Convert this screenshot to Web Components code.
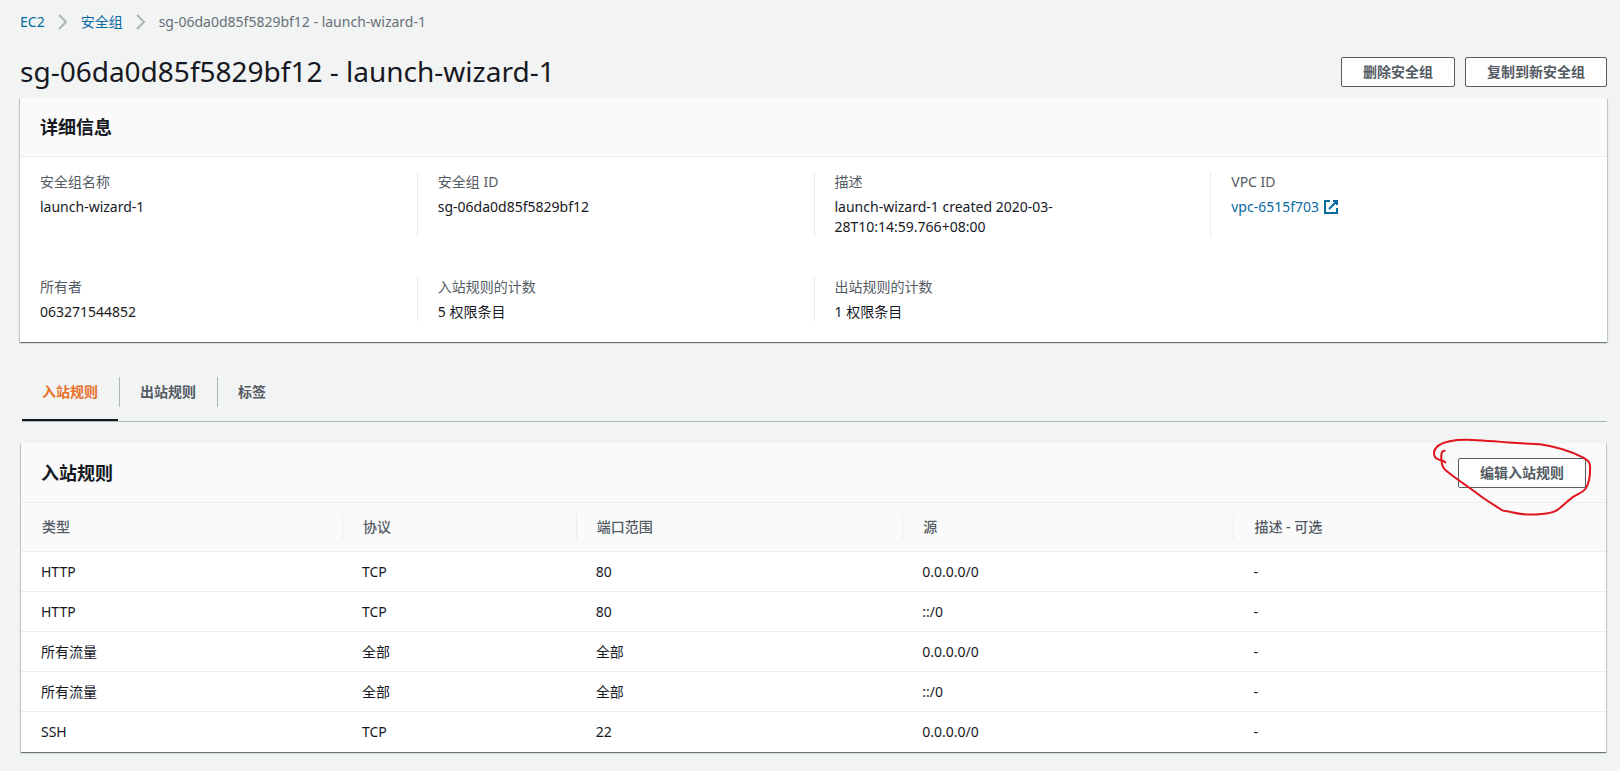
<!DOCTYPE html>
<html lang="zh-CN">
<head>
<meta charset="utf-8">
<title>sg-06da0d85f5829bf12 - launch-wizard-1</title>
<style>
  body {
    margin: 0;
    background: #f2f3f3;
    color: #16191f;
    font: 14px/20px "Noto Sans", "Noto Sans CJK SC", sans-serif;
  }
</style>
</head>
<body>
<sg-page></sg-page>

<script>
const details = [
  { label: "安全组名称", value: "launch-wizard-1" },
  { label: "安全组 ID", value: "sg-06da0d85f5829bf12" },
  { label: "描述", value: "launch-wizard-1 created 2020-03-28T10:14:59.766+08:00" },
  { label: "VPC ID", value: "vpc-6515f703", link: true },
  { label: "所有者", value: "063271544852" },
  { label: "入站规则的计数", value: "5 权限条目" },
  { label: "出站规则的计数", value: "1 权限条目" }
];

const columns = ["类型", "协议", "端口范围", "源", "描述 - 可选"];
const rules = [
  ["HTTP", "TCP", "80", "0.0.0.0/0", "-"],
  ["HTTP", "TCP", "80", "::/0", "-"],
  ["所有流量", "全部", "全部", "0.0.0.0/0", "-"],
  ["所有流量", "全部", "全部", "::/0", "-"],
  ["SSH", "TCP", "22", "0.0.0.0/0", "-"]
];

const externalIcon = `
  <svg width="16" height="16" viewBox="0 0 16 16" fill="none" stroke="currentColor" stroke-width="2" aria-hidden="true">
    <path d="M7 2H2v12h12V9M10 2h4v4M6 10l8-8"/>
  </svg>`;

function define(name, html, setup) {
  const template = document.createElement("template");
  template.innerHTML = html;

  customElements.define(name, class extends HTMLElement {
    constructor() {
      super();
      const shadow = this.attachShadow({ mode: "open" });
      shadow.append(template.content.cloneNode(true));
      if (setup) setup(shadow, this);
    }
  });
}

define("sg-button", `
  <style>
    :host { display: block; }
    button {
      display: block;
      height: 30px;
      padding: 0 21px;
      border: 1px solid #545b64;
      border-radius: 2px;
      background: #fff;
      color: #545b64;
      font: inherit;
      font-weight: 700;
      white-space: nowrap;
      cursor: pointer;
    }
    button:hover { background: #fafafa; }
  </style>
  <button type="button"><slot></slot></button>
`);

define("sg-breadcrumbs", `
  <style>
    :host { display: block; }
    nav { display: flex; align-items: center; gap: 12px; color: #687078; }
    a { color: #076ba3; text-decoration: none; }
    svg { width: 12px; height: 16px; fill: none; stroke: #aab7b8; stroke-width: 2; }
  </style>
  <nav aria-label="Breadcrumb">
    <a href="#ec2">EC2</a>
    <svg viewBox="0 0 12 16"><path d="M2 1l7 7-7 7"/></svg>
    <a href="#groups">安全组</a>
    <svg viewBox="0 0 12 16"><path d="M2 1l7 7-7 7"/></svg>
    <span>sg-06da0d85f5829bf12 - launch-wizard-1</span>
  </nav>
`);

define("sg-panel", `
  <style>
    :host {
      display: block;
      background: #fff;
      box-shadow: 0 1px 1px 0 rgba(0, 28, 36, .4), 1px 1px 1px 0 rgba(0, 28, 36, .15), -1px 1px 1px 0 rgba(0, 28, 36, .15);
    }
    header {
      display: flex;
      align-items: center;
      justify-content: space-between;
      height: var(--panel-header-height, 58px);
      padding: 0 20px;
      background: #fafafa;
      border-bottom: 1px solid #eaeded;
    }
    h2 { margin: 0; font-size: 18px; line-height: 22px; font-weight: 700; }
  </style>
  <header>
    <h2><slot name="title"></slot></h2>
    <slot name="actions"></slot>
  </header>
  <slot></slot>
`);

define("sg-details", `
  <style>
    :host { display: block; padding: 15px 0 20px; }
    dl {
      display: grid;
      grid-template-columns: repeat(4, 1fr);
      row-gap: 40px;
      margin: 0;
    }
    div { padding: 0 20px; border-left: 1px solid #eaeded; }
    div:nth-child(4n + 1) { border-left: 0; }
    dt { margin-bottom: 5px; color: #545b64; }
    dd { margin: 0; }
    a { display: inline-flex; align-items: center; gap: 4px; color: #076ba3; text-decoration: none; }
  </style>
  <dl></dl>
`, shadow => {
  const list = shadow.querySelector("dl");
  details.forEach(d => {
    const item = document.createElement("div");
    const value = d.link ? `<a href="#vpc">${d.value}${externalIcon}</a>` : d.value;
    item.innerHTML = `<dt>${d.label}</dt><dd>${value}</dd>`;
    list.append(item);
  });
});

define("sg-tabs", `
  <style>
    :host { display: block; border-bottom: 1px solid #aab7b8; }
    div { display: flex; gap: 1px; }
    button {
      display: flex;
      padding: 0;
      border: 0;
      border-bottom: 2px solid transparent;
      background: none;
      color: #545b64;
      font: inherit;
      font-weight: 700;
      cursor: pointer;
    }
    span { padding: 5px 20px; margin-bottom: 12px; border-left: 1px solid #aab7b8; }
    button:first-child span { border-left: 0; }
    button[aria-selected="true"] { color: #e8702a; border-bottom-color: #16191f; }
  </style>
  <div role="tablist">
    <button type="button" role="tab" aria-selected="true"><span>入站规则</span></button>
    <button type="button" role="tab" aria-selected="false"><span>出站规则</span></button>
    <button type="button" role="tab" aria-selected="false"><span>标签</span></button>
  </div>
`, shadow => {
  const tabs = shadow.querySelectorAll("button");
  tabs.forEach(tab => {
    tab.addEventListener("click", () => {
      tabs.forEach(t => t.setAttribute("aria-selected", t === tab));
    });
  });
});

define("sg-rules", `
  <style>
    :host { display: block; }
    table { width: 100%; table-layout: fixed; border-collapse: separate; border-spacing: 0; }
    th, td { padding: 0; text-align: left; font-weight: 400; border-bottom: 1px solid #eaeded; }
    th { height: 48px; background: #fafafa; color: #545b64; font-weight: 500; }
    th div { padding: 3px 20px; border-left: 1px solid #eaeded; }
    th:first-child div { border-left-color: transparent; }
    td { height: 39px; padding: 0 20px; }
    tr:last-child td { border-bottom-color: transparent; }
    col:nth-child(1) { width: 20.25%; }
    col:nth-child(2) { width: 14.75%; }
    col:nth-child(3) { width: 20.6%; }
    col:nth-child(4) { width: 20.9%; }
  </style>
  <table>
    <colgroup><col><col><col><col><col></colgroup>
    <thead><tr></tr></thead>
    <tbody></tbody>
  </table>
`, shadow => {
  shadow.querySelector("thead tr").innerHTML = columns.map(c => `<th scope="col"><div>${c}</div></th>`).join("");
  shadow.querySelector("tbody").innerHTML = rules
    .map(r => `<tr>${r.map(v => `<td>${v}</td>`).join("")}</tr>`)
    .join("");
});

// hand-drawn red loop around whatever is slotted in
define("sg-marked", `
  <style>
    :host { display: block; position: relative; }
    svg {
      position: absolute;
      top: -37px;
      right: -34px;
      width: 220px;
      height: 120px;
      fill: none;
      stroke: #e0141c;
      stroke-width: 6;
      stroke-linecap: round;
      stroke-linejoin: round;
      pointer-events: none;
    }
  </style>
  <slot></slot>
  <svg viewBox="0 0 660 360" aria-hidden="true">
    <path d="M134 89C126 89 124 95 124 104C123 124 125 138 137 148C155 163 180 181 202 196C235 222 275 249 307 268C317 272 326 270 336 274C362 281 395 282 425 279C445 277 460 274 470 268C490 256 505 236 522 226C535 218 548 215 556 204C568 187 571 156 570 134C568 121 562 117 550 110C513 91 469 77 420 70C400 67 380 69 350 66C300 62 250 58 205 56C165 55 133 62 116 73C103 83 100 96 104 106C108 116 120 117 128 119L136 124"/>
  </svg>
`);

define("sg-page", `
  <style>
    :host { display: block; padding: 12px 13px 18px 20px; }
    .top { display: flex; align-items: center; justify-content: space-between; height: 36px; margin: 22px 0 8px; }
    h1 { margin: 0 0 2px; font-size: 28px; line-height: 36px; font-weight: 400; }
    .actions { display: flex; gap: 10px; }
    sg-tabs { margin: 35px 0 21px 2px; }
    .rules { margin: 0 1px; --panel-header-height: 59px; }
  </style>
  <sg-breadcrumbs></sg-breadcrumbs>
  <div class="top">
    <h1>sg-06da0d85f5829bf12 - launch-wizard-1</h1>
    <div class="actions">
      <sg-button>删除安全组</sg-button>
      <sg-button>复制到新安全组</sg-button>
    </div>
  </div>
  <sg-panel>
    <span slot="title">详细信息</span>
    <sg-details></sg-details>
  </sg-panel>
  <sg-tabs></sg-tabs>
  <sg-panel class="rules">
    <span slot="title">入站规则</span>
    <sg-marked slot="actions"><sg-button>编辑入站规则</sg-button></sg-marked>
    <sg-rules></sg-rules>
  </sg-panel>
`);
</script>
</body>
</html>
